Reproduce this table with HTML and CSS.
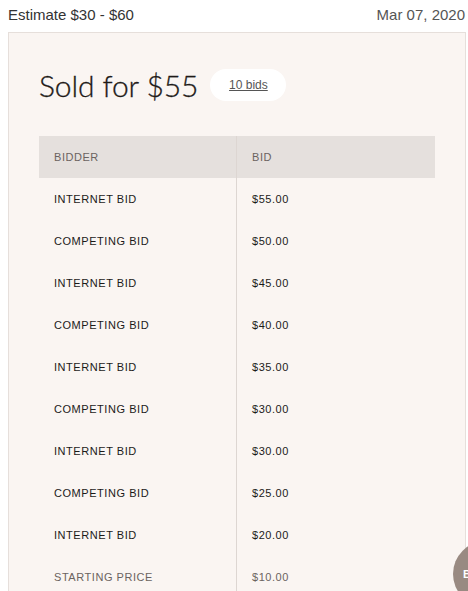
FILE: index.html
```html
<!DOCTYPE html>
<html>
<head>
<meta charset="utf-8">
<link rel="stylesheet" href="styles.css">
</head>
<body>
<div class="topbar">
  <span class="estimate">Estimate $30 - $60</span>
  <span class="date">Mar 07, 2020</span>
</div>
<div class="card">
  <div class="headline">
    <h1 class="sold">Sold for $55</h1>
    <span class="pill"><a href="#" class="bids">10 bids</a></span>
  </div>
  <table class="bids-table">
    <thead>
      <tr><th class="col1">BIDDER</th><th>BID</th></tr>
    </thead>
    <tbody>
      <tr><td class="col1">INTERNET BID</td><td>$55.00</td></tr>
      <tr><td class="col1">COMPETING BID</td><td>$50.00</td></tr>
      <tr><td class="col1">INTERNET BID</td><td>$45.00</td></tr>
      <tr><td class="col1">COMPETING BID</td><td>$40.00</td></tr>
      <tr><td class="col1">INTERNET BID</td><td>$35.00</td></tr>
      <tr><td class="col1">COMPETING BID</td><td>$30.00</td></tr>
      <tr><td class="col1">INTERNET BID</td><td>$30.00</td></tr>
      <tr><td class="col1">COMPETING BID</td><td>$25.00</td></tr>
      <tr><td class="col1">INTERNET BID</td><td>$20.00</td></tr>
      <tr class="start"><td class="col1">STARTING PRICE</td><td>$10.00</td></tr>
    </tbody>
  </table>
</div>
<div class="fab">B</div>
</body>
</html>
```

FILE: styles.css
```css
html, body {
  margin: 0;
  padding: 0;
  background: #ffffff;
  font-family: "Liberation Sans", Arial, sans-serif;
  overflow: hidden;
}
.topbar {
  display: flex;
  justify-content: space-between;
  align-items: center;
  height: 28px;
  padding: 0 3px 0 8px;
  font-size: 15px;
  color: #333;
}
.date { color: #555; }
.card {
  margin: 4px 2px 0 8px;
  background: #faf5f2;
  border: 1px solid #e6dfdb;
  padding: 31px 30px 0 30px;
}
.headline {
  display: flex;
  align-items: center;
  gap: 12px;
  height: 42px;
}
.sold {
  margin: 0;
  font-family: "Lato", sans-serif;
  font-weight: 300;
  font-size: 30px;
  color: #1e1a18;
  letter-spacing: -0.1px;
  -webkit-text-stroke: 0.3px #1e1a18;
}
.pill {
  background: #fff;
  border-radius: 16px;
  height: 32px;
  width: 76px;
  display: flex;
  align-items: center;
  justify-content: center;
}
.bids {
  font-size: 12px;
  color: #555;
  text-decoration: underline;
}
.bids-table {
  margin-top: 30px;
  width: 100%;
  border-collapse: collapse;
  font-size: 11px;
  letter-spacing: 0.55px;
}
.bids-table th, .bids-table td {
  height: 42px;
  padding: 0 0 0 15px;
  text-align: left;
}
.bids-table th {
  background: #e5e0dd;
  color: #6b6360;
  font-weight: 400;
}
.bids-table td { color: #1c1a19; }
.col1 {
  width: 182px;
  border-right: 1px solid #ddd6d2;
}
.start td { color: #6b6360; }
.fab {
  position: fixed;
  left: 453px;
  top: 541px;
  width: 66px;
  height: 66px;
  border-radius: 50%;
  background: #998a82;
  color: #fff;
  font-size: 11px;
  font-weight: 700;
  display: flex;
  align-items: center;
  padding-left: 10px;
  box-sizing: border-box;
}
```
